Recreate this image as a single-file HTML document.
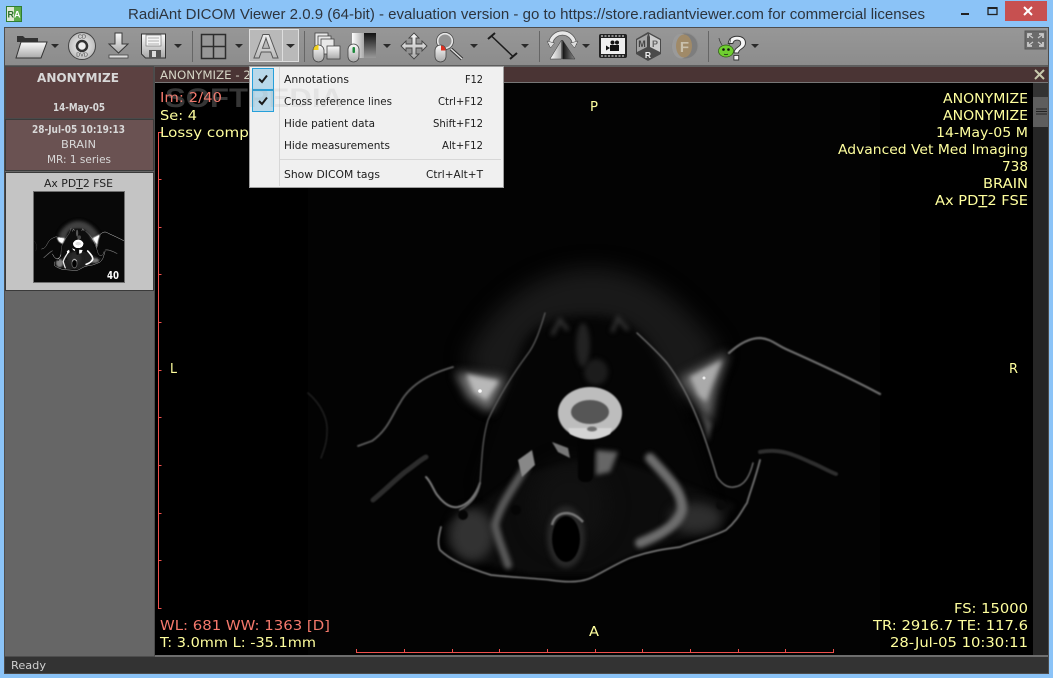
<!DOCTYPE html>
<html><head><meta charset="utf-8"><title>RadiAnt DICOM Viewer</title>
<style>
html,body{margin:0;padding:0;width:1053px;height:678px;overflow:hidden;background:#8bc3f7}
svg{display:block}
.o{font-family:"DejaVu Sans",sans-serif;font-size:13px;fill:#ffff9e}
.r{fill:#f5796c}
.m{font-family:"DejaVu Sans",sans-serif;font-size:11px;fill:#1c1c1c}
.p{font-family:"DejaVu Sans",sans-serif;font-size:10.5px;fill:#d8d8d8}
.b{font-weight:bold}
</style></head><body>
<svg width="1053" height="678" viewBox="0 0 1053 678" xmlns="http://www.w3.org/2000/svg">
<defs>
<filter id="b1" x="-20%" y="-20%" width="140%" height="140%" color-interpolation-filters="sRGB"><feGaussianBlur stdDeviation="0.8"/></filter>
<filter id="b2" x="-30%" y="-30%" width="160%" height="160%" color-interpolation-filters="sRGB"><feGaussianBlur stdDeviation="2.5"/></filter>
<filter id="b4" x="-50%" y="-50%" width="200%" height="200%" color-interpolation-filters="sRGB"><feGaussianBlur stdDeviation="5"/></filter>
<filter id="b3" x="-40%" y="-40%" width="180%" height="180%" color-interpolation-filters="sRGB"><feGaussianBlur stdDeviation="10"/></filter>
<linearGradient id="tb" x1="0" y1="0" x2="0" y2="1"><stop offset="0" stop-color="#979797"/><stop offset="1" stop-color="#8c8c8c"/></linearGradient>
<linearGradient id="ic" x1="0" y1="0" x2="0" y2="1"><stop offset="0" stop-color="#fbfbfb"/><stop offset="1" stop-color="#a9a9a9"/></linearGradient>
<linearGradient id="ich" x1="0" y1="0" x2="1" y2="0"><stop offset="0" stop-color="#fff"/><stop offset="1" stop-color="#aaa"/></linearGradient>
<linearGradient id="blk" x1="0" y1="0" x2="0" y2="1"><stop offset="0" stop-color="#111"/><stop offset="1" stop-color="#999"/></linearGradient>
<linearGradient id="blk2" x1="0" y1="0" x2="1" y2="0"><stop offset="0" stop-color="#111"/><stop offset="1" stop-color="#888"/></linearGradient>
<radialGradient id="cd"><stop offset="0" stop-color="#f5f5f5"/><stop offset="1" stop-color="#bdbdbd"/></radialGradient>
<g id="scan">
<rect x="308" y="83" width="572" height="572" fill="#030303"/>
<path d="M465 360C485 310 535 268 592 268C650 268 690 310 720 350L690 400L490 400Z" fill="#191919" filter="url(#b3)"/>
<path d="M520 350C530 325 550 315 590 315C625 315 645 330 660 360L695 440L715 500L690 530L480 530L475 480L495 420Z" fill="#050505" filter="url(#b4)"/>
<path d="M445 525L480 505L520 475L600 455L660 475L735 505L720 530L640 552L590 574L530 574L470 560L447 545Z" fill="#0c0c0c" filter="url(#b2)"/>
<ellipse cx="472" cy="535" rx="22" ry="26" fill="#323232" filter="url(#b4)"/>
<ellipse cx="695" cy="518" rx="26" ry="15" fill="#2e2e2e" filter="url(#b4)"/>
<ellipse cx="570" cy="505" rx="38" ry="42" fill="#111" filter="url(#b3)"/>
<ellipse cx="583" cy="345" rx="7" ry="22" fill="#222" filter="url(#b2)"/>
<ellipse cx="596" cy="372" rx="12" ry="13" fill="#1c1c1c" filter="url(#b2)"/>
<path d="M552 335L560 320L568 330M612 332L618 318L628 330" fill="none" stroke="#303030" stroke-width="4" filter="url(#b2)"/>
<path d="M455 372L505 378L490 412L468 398Z" fill="#777" filter="url(#b4)"/>
<path d="M680 378L728 352L716 390L710 425L698 405Z" fill="#6e6e6e" filter="url(#b4)"/>
<path d="M466 374L499 381L486 400L474 392Z" fill="#b8b8b8" filter="url(#b2)"/>
<path d="M690 377L722 360L712 385L706 402L698 395Z" fill="#aaa" filter="url(#b2)"/>
<path d="M702 412L712 424L708 442Z" fill="#4a4a4a" filter="url(#b2)"/>
<g fill="none" stroke-linecap="round" filter="url(#b1)">
<path d="M358 446L372 441C388 430 392 415 400 403C408 388 425 375 453 367" stroke="#5e5e5e" stroke-width="1.800"/>
<path d="M545 313C540 330 535 345 527 355C512 375 497 400 488 420C482 440 482 460 480 483" stroke="#5e5e5e" stroke-width="1.300"/>
<path d="M637 333C650 345 660 355 667 363C680 380 690 400 698 420C706 440 712 460 717 477C722 484 727 488 734 487C745 486 750 475 753 463" stroke="#707070" stroke-width="1.400"/>
<path d="M426 477C432 483 434 492 438 496C445 505 452 508 458 507C468 505 476 495 480 483" stroke="#7d7d7d" stroke-width="2"/>
<path d="M729 353C740 343 750 338 760 338C772 339 776 345 788 350C815 362 850 378 880 394" stroke="#6e6e6e" stroke-width="2.200"/>
<path d="M441 527C439 535 437 543 440 550C450 560 468 568 491 575C510 577 530 578 550 580C570 583 583 582 593 577C610 568 620 562 630 558C650 551 665 549 680 547C695 541 712 537 726 530C738 520 742 510 747 503C750 492 755 480 760 460" stroke="#787878" stroke-width="1.700"/>
<path d="M373 500C385 490 395 480 405 472C415 465 420 460 426 457" stroke="#2c2c2c" stroke-width="5"/>
<path d="M760 452C780 448 795 455 810 462C820 466 830 472 836 474" stroke="#2e2e2e" stroke-width="4"/>
<path d="M308 393C322 405 328 420 327 432C327 442 324 450 321 458" stroke="#202020" stroke-width="1.500"/>
<path d="M480 483C478 495 472 503 460 510" stroke="#666" stroke-width="1.800"/>
</g>
<g filter="url(#b2)" fill="none" stroke-linecap="round">
<path d="M525 468C512 490 500 505 495 525C498 540 505 555 508 565" stroke="#5a5a5a" stroke-width="8"/>
<path d="M650 458C665 475 683 490 682 510C678 525 660 535 640 543" stroke="#6e6e6e" stroke-width="10"/>
</g>
<path d="M518 460L532 450L535 465L522 477Z" fill="#888" filter="url(#b1)"/>
<path d="M596 450L618 452L610 472L596 475Z" fill="#666" filter="url(#b2)"/>
<path d="M552 442L568 448L570 458L558 452Z" fill="#777" filter="url(#b1)"/>
<rect x="578" y="440" width="15" height="42" rx="6" fill="#030303" filter="url(#b1)"/>
<ellipse cx="590" cy="413" rx="32" ry="26" fill="#bdbdbd" filter="url(#b1)"/>
<path d="M570 434Q590 444 610 434L612 428L568 428Z" fill="#d4d4d4" filter="url(#b1)"/>
<ellipse cx="590" cy="412" rx="19" ry="12" fill="#565656" filter="url(#b1)"/>
<ellipse cx="592" cy="429" rx="5" ry="2.500" fill="#6e6e6e" filter="url(#b1)"/>
<ellipse cx="566" cy="537" rx="19" ry="31" fill="#282828" filter="url(#b2)"/>
<path d="M552 525C555 512 570 508 583 522" fill="none" stroke="#777" stroke-width="2.500" filter="url(#b1)"/>
<ellipse cx="566" cy="539" rx="14" ry="23" fill="#000" filter="url(#b1)"/>
<circle cx="463" cy="515" r="5" fill="#050505" filter="url(#b1)"/>
<circle cx="516" cy="510" r="5" fill="#050505" filter="url(#b1)"/>
<circle cx="721" cy="505" r="5" fill="#0a0a0a" filter="url(#b1)"/>
<circle cx="480" cy="391" r="1.800" fill="#fff"/>
<circle cx="704" cy="378" r="1.500" fill="#eee"/>
</g>
</defs>

<!-- window frame -->
<rect width="1053" height="678" fill="#8bc3f7"/>
<rect x="4" y="27" width="1045" height="647" fill="#4d4d4d"/>
<rect x="5" y="28" width="1043" height="38" fill="url(#tb)"/>
<rect x="5" y="65" width="1043" height="2" fill="#5d5d5d"/>

<!-- title bar -->
<rect x="6" y="6" width="16" height="16" fill="#2f7d32"/>
<rect x="7" y="7" width="7" height="14" fill="#dfe9d2"/><rect x="14" y="7" width="7" height="14" fill="#5cab4a"/>
<text x="7.500" y="17.500" font-family="Liberation Sans,sans-serif" font-size="9" font-weight="bold" fill="#2b6d2b">R</text>
<text x="14" y="17.500" font-family="Liberation Sans,sans-serif" font-size="9" font-weight="bold" fill="#fff">A</text>
<text x="128" y="19" font-family="Liberation Sans,sans-serif" font-size="15" fill="#2d343d" textLength="797" lengthAdjust="spacingAndGlyphs">RadiAnt DICOM Viewer 2.0.9 (64-bit) - evaluation version - go to https://store.radiantviewer.com for commercial licenses</text>
<rect x="961" y="13" width="8" height="2" fill="#222"/>
<rect x="988" y="8" width="9" height="6.500" fill="none" stroke="#222" stroke-width="1.300"/><rect x="987.500" y="7" width="10" height="2" fill="#222"/>
<rect x="1005" y="1" width="42" height="20" fill="#c75050"/>
<path d="M1024 7L1032 15M1032 7L1024 15" stroke="#fff" stroke-width="2"/>

<!-- toolbar separators -->
<g fill="#666"><rect x="192" y="31" width="1" height="31"/><rect x="304" y="31" width="1" height="31"/><rect x="539" y="31" width="1" height="31"/><rect x="708" y="31" width="1" height="31"/></g>

<!-- selected button -->
<rect x="249.500" y="29.500" width="49" height="32" fill="#b9b9b9" stroke="#dedede"/>
<rect x="282" y="30" width="1" height="31" fill="#dedede"/>

<!-- dropdown arrows -->
<path fill="#2a2a2a" d="M51 44h8l-4 4zM174 44h8l-4 4zM235 44h8l-4 4zM286 44h9l-4.500 4zM383 44h8l-4 4zM470 44h8l-4 4zM521 44h8l-4 4zM582 44h8l-4 4zM751 44h8l-4 4z"/>

<!-- folder -->
<path d="M17 36h6l2 2h13v4H17z" fill="#333"/>
<path d="M21 42H47L41 58H16Z" fill="url(#ic)" stroke="#333"/>
<!-- cd -->
<circle cx="82" cy="46" r="13.500" fill="url(#cd)" stroke="#444"/>
<circle cx="82" cy="46" r="5" fill="#eee" stroke="#333" stroke-width="2.500"/>
<text x="82" y="38.500" text-anchor="middle" font-family="Liberation Sans,sans-serif" font-size="5.500" fill="#444">CD</text>
<text x="82" y="56.500" text-anchor="middle" font-family="Liberation Sans,sans-serif" font-size="5.500" fill="#444">DVD</text>
<!-- download -->
<path d="M115 33h7v11h6l-9.500 9l-9.500-9h6z" fill="url(#ic)" stroke="#3a3a3a"/>
<rect x="109" y="55" width="19" height="3" fill="#ddd" stroke="#444" stroke-width=".8"/>
<!-- floppy -->
<path d="M141.500 34h24v24h-20l-4-4z" fill="url(#ic)" stroke="#333"/>
<rect x="146" y="35" width="15" height="11" fill="#f5f5f5" stroke="#777" stroke-width=".7"/>
<path d="M148 38h11M148 41h11M148 44h11" stroke="#999" stroke-width=".7"/>
<rect x="149" y="50" width="12" height="8" fill="#555"/><rect x="152" y="51" width="4" height="6" fill="#ddd"/>
<!-- grid -->
<rect x="201.500" y="34.500" width="24" height="24" fill="#979797" stroke="#2d2d2d" stroke-width="1.500"/>
<path d="M213.500 34v25M201 46.500h25" stroke="#2d2d2d" stroke-width="1.500"/>
<!-- A -->
<text x="253" y="58" font-family="Liberation Sans,sans-serif" font-size="34" font-weight="bold" fill="url(#ic)" stroke="#555" stroke-width=".9" textLength="26" lengthAdjust="spacingAndGlyphs">A</text>
<!-- stack + mouse -->
<g stroke="#444" stroke-width=".8" fill="#e8e8e8">
<rect x="315" y="33" width="13" height="15"/><rect x="318" y="36" width="13" height="15"/><rect x="321" y="39" width="13" height="15"/>
<rect x="327" y="46" width="13" height="13" fill="url(#ic)"/>
<rect x="313" y="45" width="11" height="17" rx="5.500" fill="url(#ic)"/>
</g>
<path d="M313.500 50v-1a5 5 0 0 1 5-4v5z" fill="#f0d020"/>
<!-- gradient + mouse -->
<rect x="352" y="33" width="12" height="25" fill="url(#ich)"/><rect x="364" y="33" width="12" height="25" fill="url(#blk)"/>
<rect x="348" y="44" width="11" height="18" rx="5.500" fill="url(#ic)" stroke="#444" stroke-width=".8"/>
<rect x="352.500" y="47" width="2.500" height="6" rx="1" fill="#1c8a3c"/>
<!-- move -->
<path d="M414 33l5 5h-3v6h6v-3l5 5-5 5v-3h-6v6h3l-5 5-5-5h3v-6h-6v3l-5-5 5-5v3h6v-6h-3z" fill="url(#ic)" stroke="#444" stroke-width=".9"/>
<!-- magnifier -->
<path d="M451 49L462 59" stroke="#333" stroke-width="3.500"/><path d="M451 49L462 59" stroke="#ddd" stroke-width="1.500"/>
<circle cx="445" cy="41" r="7.500" fill="none" stroke="#e6e6e6" stroke-width="2"/><circle cx="445" cy="41" r="8.500" fill="none" stroke="#444" stroke-width=".7"/>
<rect x="435" y="45" width="11" height="17" rx="5.500" fill="url(#ic)" stroke="#444" stroke-width=".8"/>
<path d="M441 45.500a4.500 4.500 0 0 1 4.500 5H441z" fill="#e03020"/>
<!-- ruler -->
<path d="M491.500 36L513 56.500" stroke="#1c1c1c" stroke-width="1.500"/><path d="M488 39l7-6M510 59l7-6" stroke="#1c1c1c" stroke-width="2"/>
<!-- rotate -->
<path d="M550.500 45A12 12 0 0 1 574.500 45" fill="none" stroke="#555" stroke-width="5"/>
<path d="M550.500 45A12 12 0 0 1 574.500 45" fill="none" stroke="#e8e8e8" stroke-width="3.500"/>
<path d="M547 41l3.500 7 4-5zM578 41l-3.500 7-4-5z" fill="#ddd" stroke="#444" stroke-width=".5"/>
<path d="M561.500 40L550 59h11.500z" fill="url(#ich)" stroke="#333" stroke-width=".5"/><path d="M562.500 40L575 59h-12.500z" fill="url(#blk2)" stroke="#333" stroke-width=".5"/>
<!-- film -->
<rect x="599" y="34" width="28" height="24" rx="2" fill="#222"/>
<rect x="601" y="38" width="24" height="16" fill="#efefef"/>
<path d="M601 36h24M601 56h24" stroke="#ccc" stroke-width="1.200" stroke-dasharray="2 1.500"/>
<rect x="610" y="45" width="9" height="6" fill="#111"/><circle cx="612.500" cy="42.500" r="2" fill="#111"/><circle cx="617" cy="42.500" r="2" fill="#111"/><path d="M610 48l-4-2.500v5z" fill="#111"/>
<!-- cube -->
<path d="M648 32L661 39V54L648 61L636 54V39Z" fill="#4a4a4a"/>
<path d="M648 34L637 40V52L647 47V37Z" fill="#a5a5a5"/><path d="M649 34L660 40V52L650 47V37Z" fill="#cdcdcd"/>
<text x="642" y="47" text-anchor="middle" font-family="Liberation Sans,sans-serif" font-size="9" font-weight="bold" fill="#444">M</text>
<text x="655" y="47" text-anchor="middle" font-family="Liberation Sans,sans-serif" font-size="9" font-weight="bold" fill="#666">P</text>
<text x="648" y="58" text-anchor="middle" font-family="Liberation Sans,sans-serif" font-size="8.500" font-weight="bold" fill="#eee">R</text>
<!-- F -->
<circle cx="685" cy="46" r="13" fill="#7d7d7d" stroke="#8e8e8e"/><ellipse cx="681" cy="46" rx="9" ry="12.500" fill="#9a9a9a"/>
<ellipse cx="684" cy="46" rx="8" ry="11.500" fill="#a08a68"/>
<text x="684.500" y="52" text-anchor="middle" font-family="Liberation Sans,sans-serif" font-size="15" font-weight="bold" fill="#c9c0ac">F</text>
<!-- bug ? -->
<text x="737" y="60" text-anchor="middle" font-family="Liberation Sans,sans-serif" font-size="34" font-weight="bold" fill="#f6f6f6" stroke="#333" stroke-width=".9">?</text>
<ellipse cx="726" cy="51" rx="7.500" ry="6" fill="#6fcf30" stroke="#2c5a10" stroke-width=".7"/>
<circle cx="723.500" cy="49.500" r="1.300" fill="#111"/><circle cx="728.500" cy="49.500" r="1.300" fill="#111"/>
<path d="M724 54q2 1.500 4 0" stroke="#111" fill="none" stroke-width=".7"/>
<path d="M722 45Q719 40 719 38M729 45Q731 41 730 38" fill="none" stroke="#333" stroke-width=".7"/>
<!-- fullscreen -->
<rect x="1025" y="31" width="21" height="18" fill="#6b6b6b" stroke="#585858"/>
<g fill="none" stroke="#c9c9c9" stroke-width="1.800"><path d="M1028 38v-4h4M1043 38v-4h-4M1028 42v4h4M1043 42v4h-4"/><path d="M1029 35l4 3M1042 35l-4 3M1029 45l4-3M1042 45l-4-3" stroke-width="1.300"/></g>

<!-- left panel -->
<rect x="5" y="67" width="149" height="589" fill="#666"/>
<rect x="5.500" y="66.500" width="148" height="52" fill="#5c4141" stroke="#4a4a4a"/>
<rect x="5.500" y="119.500" width="148" height="51" fill="#6a5252" stroke="#3a3a3a"/>
<rect x="5.500" y="172.500" width="148" height="118" fill="#c4c4c4" stroke="#3a3a3a"/>
<text class="p b" style="font-size:12px" x="37" y="82" textLength="82" lengthAdjust="spacingAndGlyphs">ANONYMIZE</text>
<text class="p b" x="53" y="111" textLength="52" lengthAdjust="spacingAndGlyphs">14-May-05</text>
<text class="p b" x="32" y="133" textLength="93" lengthAdjust="spacingAndGlyphs">28-Jul-05 10:19:13</text>
<text class="p" x="61" y="148" textLength="35" lengthAdjust="spacingAndGlyphs">BRAIN</text>
<text class="p" x="47" y="163" textLength="64" lengthAdjust="spacingAndGlyphs">MR: 1 series</text>
<text class="p" style="fill:#222" x="44" y="187" textLength="69" lengthAdjust="spacingAndGlyphs">Ax PD<tspan text-decoration="underline">T</tspan>2 FSE</text>
<rect x="33.500" y="191.500" width="91" height="91" fill="#000" stroke="#6e6e6e"/>
<svg x="34" y="192" width="90" height="90" viewBox="34 192 90 90"><g style="filter:brightness(2.6)"><use href="#scan" transform="translate(-15 178.600) scale(.158)"/></g></svg>
<text class="p b" style="fill:#fff" x="107" y="279" textLength="12" lengthAdjust="spacingAndGlyphs">40</text>

<!-- viewer -->
<rect x="155" y="67" width="893" height="15" fill="#4a3434"/>
<rect x="155" y="82" width="893" height="1" fill="#777"/>
<text class="o" style="font-size:11.500px;fill:#d6d6c6" x="160" y="79" textLength="110" lengthAdjust="spacingAndGlyphs">ANONYMIZE - 2/40</text>
<path d="M1035 70L1044 79M1044 70L1035 79" stroke="#c8c8ac" stroke-width="2"/>
<rect x="155" y="83" width="878" height="572" fill="#000"/>
<use href="#scan"/>
<rect x="1033" y="83" width="15" height="572" fill="#262626"/>
<rect x="1033" y="83" width="15" height="14" fill="#333"/>
<rect x="1033" y="97" width="15" height="30" fill="#5e5e5e"/>
<path d="M1036 109h11M1036 111.500h11M1036 114h11" stroke="#222"/>
<rect x="155" y="655" width="893" height="2" fill="#6e6e6e"/>

<!-- watermark -->
<text x="165" y="107" font-family="Liberation Sans,sans-serif" font-size="27" font-weight="bold" fill="#2a2a2a" textLength="178" lengthAdjust="spacingAndGlyphs">SOFTPEDIA</text>

<!-- rulers -->
<g stroke="#f0504c" stroke-width="1" fill="none">
<path d="M161.500 132.500H158.500V608.500H161.500M158.500 179.500h3M158.500 227.500h3M158.500 274.500h3M158.500 322.500h3M158.500 370.500h3M158.500 417.500h3M158.500 465.500h3M158.500 513.500h3M158.500 560.500h3"/>
<path d="M356.500 649V652.500H833.500V649M404.500 649v3M452.500 649v3M499.500 649v3M547.500 649v3M595.500 649v3M642.500 649v3M690.500 649v3M738.500 649v3M785.500 649v3"/>
</g>

<!-- overlay text -->
<text class="o r" x="160" y="102" textLength="62" lengthAdjust="spacingAndGlyphs">Im: 2/40</text>
<text class="o" x="160" y="120" textLength="37" lengthAdjust="spacingAndGlyphs">Se: 4</text>
<text class="o" x="160" y="137" textLength="95" lengthAdjust="spacingAndGlyphs">Lossy compr</text>
<text class="o" x="943" y="103" textLength="85" lengthAdjust="spacingAndGlyphs">ANONYMIZE</text>
<text class="o" x="943" y="120" textLength="85" lengthAdjust="spacingAndGlyphs">ANONYMIZE</text>
<text class="o" x="936" y="137" textLength="92" lengthAdjust="spacingAndGlyphs">14-May-05 M</text>
<text class="o" x="838" y="154" textLength="190" lengthAdjust="spacingAndGlyphs">Advanced Vet Med Imaging</text>
<text class="o" x="1002" y="171" textLength="26" lengthAdjust="spacingAndGlyphs">738</text>
<text class="o" x="983" y="188" textLength="45" lengthAdjust="spacingAndGlyphs">BRAIN</text>
<text class="o" x="935" y="205" textLength="93" lengthAdjust="spacingAndGlyphs">Ax PD<tspan text-decoration="underline">T</tspan>2 FSE</text>
<text class="o" x="590" y="111" textLength="8" lengthAdjust="spacingAndGlyphs">P</text>
<text class="o" x="170" y="373" textLength="7" lengthAdjust="spacingAndGlyphs">L</text>
<text class="o" x="1009" y="373" textLength="9" lengthAdjust="spacingAndGlyphs">R</text>
<text class="o" x="589" y="636" textLength="10" lengthAdjust="spacingAndGlyphs">A</text>
<text class="o r" x="160" y="630" textLength="170" lengthAdjust="spacingAndGlyphs">WL: 681 WW: 1363 [D]</text>
<text class="o" x="160" y="647" textLength="156" lengthAdjust="spacingAndGlyphs">T: 3.0mm L: -35.1mm</text>
<text class="o" x="954" y="613" textLength="74" lengthAdjust="spacingAndGlyphs">FS: 15000</text>
<text class="o" x="873" y="630" textLength="155" lengthAdjust="spacingAndGlyphs">TR: 2916.7 TE: 117.6</text>
<text class="o" x="890" y="647" textLength="138" lengthAdjust="spacingAndGlyphs">28-Jul-05 10:30:11</text>

<!-- menu -->
<rect x="249.500" y="66.500" width="254" height="121" fill="#f0f0f0" stroke="#a0a0a0"/>
<rect x="279" y="67" width="1" height="119" fill="#d7d7d7"/>
<rect x="252.500" y="68.500" width="21" height="21" fill="#b9d9ea" stroke="#26a0da"/>
<rect x="252.500" y="90.500" width="21" height="21" fill="#b9d9ea" stroke="#26a0da"/>
<path d="M259 79l3 3 5-6.500M259 101l3 3 5-6.500" fill="none" stroke="#1a1a1a" stroke-width="2"/>
<rect x="280" y="159" width="221" height="1" fill="#d7d7d7"/>
<text class="m" x="284" y="83" textLength="65" lengthAdjust="spacingAndGlyphs">Annotations</text>
<text class="m" x="284" y="105" textLength="108" lengthAdjust="spacingAndGlyphs">Cross reference lines</text>
<text class="m" x="284" y="127" textLength="91" lengthAdjust="spacingAndGlyphs">Hide patient data</text>
<text class="m" x="284" y="149" textLength="106" lengthAdjust="spacingAndGlyphs">Hide measurements</text>
<text class="m" x="284" y="178" textLength="96" lengthAdjust="spacingAndGlyphs">Show DICOM tags</text>
<text class="m" x="465" y="83" textLength="18" lengthAdjust="spacingAndGlyphs">F12</text>
<text class="m" x="438" y="105" textLength="45" lengthAdjust="spacingAndGlyphs">Ctrl+F12</text>
<text class="m" x="433" y="127" textLength="50" lengthAdjust="spacingAndGlyphs">Shift+F12</text>
<text class="m" x="442" y="149" textLength="41" lengthAdjust="spacingAndGlyphs">Alt+F12</text>
<text class="m" x="426" y="178" textLength="57" lengthAdjust="spacingAndGlyphs">Ctrl+Alt+T</text>
<text x="165" y="107" font-family="Liberation Sans,sans-serif" font-size="27" font-weight="bold" fill="#888" fill-opacity=".13" textLength="178" lengthAdjust="spacingAndGlyphs">SOFTPEDIA</text>

<!-- status bar -->
<rect x="5" y="657" width="1043" height="16" fill="#333"/>
<text class="p" style="font-size:11px;fill:#cfcfcf" x="11" y="669" textLength="35" lengthAdjust="spacingAndGlyphs">Ready</text>
</svg>
</body></html>
